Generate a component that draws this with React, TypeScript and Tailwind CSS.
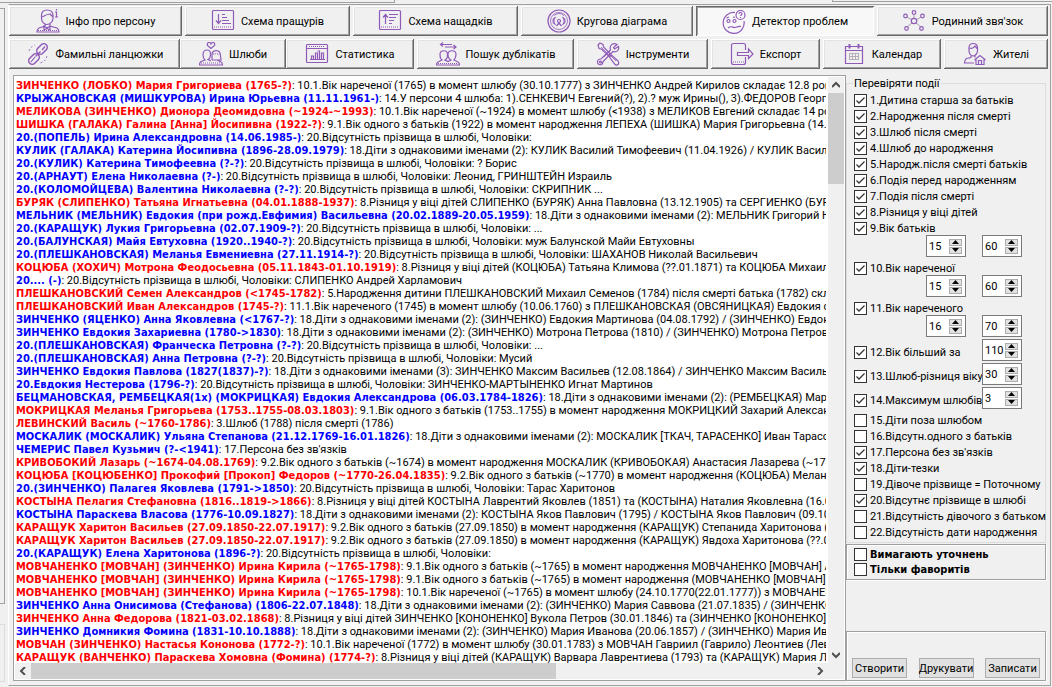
import type { ReactNode } from "react"
import clsx from "clsx"

type Kind = "red" | "blue"
type Row = [Kind, string, string]

const problems: Row[] = [
  ["red", "ЗИНЧЕНКО (ЛОБКО) Мария Григориева (1765-?)", "10.1.Вік нареченої (1765) в момент шлюбу (30.10.1777) з ЗИНЧЕНКО Андрей Кирилов складає 12.8 років"],
  ["blue", "КРЫЖАНОВСКАЯ (МИШКУРОВА) Ирина Юрьевна (11.11.1961-)", "14.У персони 4 шлюба: 1).СЕНКЕВИЧ Евгений(?), 2).? муж Ирины(), 3).ФЕДОРОВ Георгий"],
  ["red", "МЕЛИКОВА (ЗИНЧЕНКО) Дионора Деомидовна (~1924-~1993)", "10.1.Вік нареченої (~1924) в момент шлюбу (<1938) з МЕЛИКОВ Евгений складає 14 років"],
  ["red", "ШИШКА (ГАЛАКА) Галина [Анна] Йосипивна (1922-?)", "9.1.Вік одного з батьків (1922) в момент народження ЛЕПЕХА (ШИШКА) Мария Григорьевна (14.02"],
  ["blue", "20.(ПОПЕЛЬ) Ирина Александровна (14.06.1985-)", "20.Відсутність прізвища в шлюбі, Чоловіки:"],
  ["blue", "КУЛИК (ГАЛАКА) Катерина Йосипивна (1896-28.09.1979)", "18.Діти з однаковими іменами (2): КУЛИК Василий Тимофеевич (11.04.1926) / КУЛИК Василий"],
  ["blue", "20.(КУЛИК) Катерина Тимофеевна (?-?)", "20.Відсутність прізвища в шлюбі, Чоловіки: ? Борис"],
  ["blue", "20.(АРНАУТ) Елена Николаевна (?-)", "20.Відсутність прізвища в шлюбі, Чоловіки: Леонид, ГРИНШТЕЙН Израиль"],
  ["blue", "20.(КОЛОМОЙЦЕВА) Валентина Николаевна (?-?)", "20.Відсутність прізвища в шлюбі, Чоловіки: СКРИПНИК ..."],
  ["red", "БУРЯК (СЛИПЕНКО) Татьяна Игнатьевна (04.01.1888-1937)", "8.Різниця у віці дітей СЛИПЕНКО (БУРЯК) Анна Павловна (13.12.1905) та СЕРГИЕНКО (БУРЯК)"],
  ["blue", "МЕЛЬНИК (МЕЛЬНИК) Евдокия (при рожд.Евфимия) Васильевна (20.02.1889-20.05.1959)", "18.Діти з однаковими іменами (2): МЕЛЬНИК Григорий Ник"],
  ["blue", "20.(КАРАЩУК) Лукия Григорьевна (02.07.1909-?)", "20.Відсутність прізвища в шлюбі, Чоловіки: ..."],
  ["blue", "20.(БАЛУНСКАЯ) Майя Евтуховна (1920..1940-?)", "20.Відсутність прізвища в шлюбі, Чоловіки: муж Балунской Майи Евтуховны"],
  ["blue", "20.(ПЛЕШКАНОВСКАЯ) Меланья Евмениевна (27.11.1914-?)", "20.Відсутність прізвища в шлюбі, Чоловіки: ШАХАНОВ Николай Васильевич"],
  ["red", "КОЦЮБА (ХОХИЧ) Мотрона Феодосьевна (05.11.1843-01.10.1919)", "8.Різниця у віці дітей (КОЦЮБА) Татьяна Климова (??.01.1871) та КОЦЮБА Михаил"],
  ["blue", "20.... (-)", "20.Відсутність прізвища в шлюбі, Чоловіки: СЛИПЕНКО Андрей Харламович"],
  ["red", "ПЛЕШКАНОВСКИЙ Семен Александров (<1745-1782)", "5.Народження дитини ПЛЕШКАНОВСКИЙ Михаил Семенов (1784) після смерті батька (1782) складає"],
  ["red", "ПЛЕШКАНОВСКИЙ Иван Александров (1745-?)", "11.1.Вік нареченого (1745) в момент шлюбу (10.06.1760) з ПЛЕШКАНОВСКАЯ (ОВСЯНИЦКАЯ) Евдокия складає"],
  ["blue", "ЗИНЧЕНКО (ЯЦЕНКО) Анна Яковлевна (<1767-?)", "18.Діти з однаковими іменами (2): (ЗИНЧЕНКО) Евдокия Мартинова (04.08.1792) / (ЗИНЧЕНКО) Евдокия"],
  ["blue", "ЗИНЧЕНКО Евдокия Захариевна (1780->1830)", "18.Діти з однаковими іменами (2): (ЗИНЧЕНКО) Мотрона Петрова (1810) / (ЗИНЧЕНКО) Мотрона Петрова (1"],
  ["blue", "20.(ПЛЕШКАНОВСКАЯ) Франческа Петровна (?-?)", "20.Відсутність прізвища в шлюбі, Чоловіки: ..."],
  ["blue", "20.(ПЛЕШКАНОВСКАЯ) Анна Петровна (?-?)", "20.Відсутність прізвища в шлюбі, Чоловіки: Мусий"],
  ["blue", "ЗИНЧЕНКО Евдокия Павлова (1827(1837)-?)", "18.Діти з однаковими іменами (3): ЗИНЧЕНКО Максим Васильев (12.08.1864) / ЗИНЧЕНКО Максим Васильев (1"],
  ["blue", "20.Евдокия Нестерова (1796-?)", "20.Відсутність прізвища в шлюбі, Чоловіки: ЗИНЧЕНКО-МАРТЫНЕНКО Игнат Мартинов"],
  ["blue", "БЕЦМАНОВСКАЯ, РЕМБЕЦКАЯ(1х) (МОКРИЦКАЯ) Евдокия Александрова (06.03.1784-1826)", "18.Діти з однаковими іменами (2): (РЕМБЕЦКАЯ) Мария"],
  ["red", "МОКРИЦКАЯ Меланья Григорьева (1753..1755-08.03.1803)", "9.1.Вік одного з батьків (1753..1755) в момент народження МОКРИЦКИЙ Захарий Александров"],
  ["red", "ЛЕВИНСКИЙ Василь (~1760-1786)", "3.Шлюб (1788) після смерті (1786)"],
  ["blue", "МОСКАЛИК (МОСКАЛИК) Ульяна Степанова (21.12.1769-16.01.1826)", "18.Діти з однаковими іменами (2): МОСКАЛИК [ТКАЧ, ТАРАСЕНКО] Иван Тарасов"],
  ["blue", "ЧЕМЕРИС Павел Кузьмич (?-<1941)", "17.Персона без зв'язків"],
  ["red", "КРИВОБОКИЙ Лазарь (~1674-04.08.1769)", "9.2.Вік одного з батьків (~1674) в момент народження МОСКАЛИК (КРИВОБОКАЯ) Анастасия Лазарева (~1745"],
  ["red", "КОЦЮБА [КОЦЮБЕНКО] Прокофий [Прокоп] Федоров (~1770-26.04.1835)", "9.2.Вік одного з батьків (~1770) в момент народження (КОЦЮБА) Мелания"],
  ["blue", "20.(ЗИНЧЕНКО) Палагея Яковлева (1791->1850)", "20.Відсутність прізвища в шлюбі, Чоловіки: Тарас Харитонов"],
  ["red", "КОСТЫНА Пелагия Стефановна (1816..1819->1866)", "8.Різниця у віці дітей КОСТЫНА Лаврентий Яковлев (1851) та (КОСТЫНА) Наталия Яковлевна (16.0"],
  ["blue", "КОСТЫНА Параскева Власова (1776-10.09.1827)", "18.Діти з однаковими іменами (2): КОСТЫНА Яков Павлович (1795) / КОСТЫНА Яков Павлович (09.10.1"],
  ["red", "КАРАЩУК Харитон Васильев (27.09.1850-22.07.1917)", "9.2.Вік одного з батьків (27.09.1850) в момент народження (КАРАЩУК) Степанида Харитонова ("],
  ["red", "КАРАЩУК Харитон Васильев (27.09.1850-22.07.1917)", "9.2.Вік одного з батьків (27.09.1850) в момент народження (КАРАЩУК) Явдоха Харитонова (??.0"],
  ["blue", "20.(КАРАЩУК) Елена Харитонова (1896-?)", "20.Відсутність прізвища в шлюбі, Чоловіки:"],
  ["red", "МОВЧАНЕНКО [МОВЧАН] (ЗИНЧЕНКО) Ирина Кирила (~1765-1798)", "9.1.Вік одного з батьків (~1765) в момент народження МОВЧАНЕНКО [МОВЧАН] Арт"],
  ["red", "МОВЧАНЕНКО [МОВЧАН] (ЗИНЧЕНКО) Ирина Кирила (~1765-1798)", "9.1.Вік одного з батьків (~1765) в момент народження (МОВЧАНЕНКО [МОВЧАН]) М"],
  ["red", "МОВЧАНЕНКО [МОВЧАН] (ЗИНЧЕНКО) Ирина Кирила (~1765-1798)", "10.1.Вік нареченої (~1765) в момент шлюбу (24.10.1770(22.01.1777)) з МОВЧАНЕНКО"],
  ["blue", "ЗИНЧЕНКО Анна Онисимова (Стефанова) (1806-22.07.1848)", "18.Діти з однаковими іменами (2): (ЗИНЧЕНКО) Мария Саввова (21.07.1835) / (ЗИНЧЕНКО)"],
  ["red", "ЗИНЧЕНКО Анна Федорова (1821-03.02.1868)", "8.Різниця у віці дітей ЗИНЧЕНКО [КОНОНЕНКО] Вукола Петров (30.01.1846) та (ЗИНЧЕНКО [КОНОНЕНКО])"],
  ["blue", "ЗИНЧЕНКО Домникия Фомина (1831-10.10.1888)", "18.Діти з однаковими іменами (2): (ЗИНЧЕНКО) Мария Иванова (20.06.1857) / (ЗИНЧЕНКО) Мария Иванова"],
  ["red", "МОВЧАН (ЗИНЧЕНКО) Настасья Кононова (1772-?)", "10.1.Вік нареченої (1772) в момент шлюбу (30.01.1783) з МОВЧАН Гавриил (Гаврило) Леонтиев (Левко"],
  ["red", "КАРАЩУК (ВАНЧЕНКО) Параскева Хомовна (Фомина) (1774-?)", "8.Різниця у віці дітей (КАРАЩУК) Варвара Лаврентиева (1793) та (КАРАЩУК) Мария Лаврентиева"],
]

function Icon({ children }: { children: ReactNode }) {
  return (
    <svg className="size-6 shrink-0 text-[#8f5ab8]" viewBox="0 0 24 24" fill="none" stroke="currentColor" strokeWidth="1.2" aria-hidden="true">
      {children}
    </svg>
  )
}

const icons = {
  person: (
    <Icon>
      <path d="M5.500 6.500C5.500 2.500 8 1 11 1s6 1.500 6 5.500v3c0 3-3 6-6 6s-5.500-3-5.500-6zM5.500 8C8 7.500 9 5.500 14 5l3 3M9 15v2l-6 2c-2 1-2 2-2 4h22c0-2-.5-3-2-4l-7-2v-2M8 17l3 2 3-2v4l-3-1.500-3 1.500z" />
      <path d="M2 21.500h20" strokeDasharray="1 1" />
      <path d="M20.500 0v1.500M19 3h1.500v5M19 8h3" />
    </Icon>
  ),
  ancestors: (
    <Icon>
      <rect x="1.500" y="1.500" width="21" height="19" rx="1" />
      <path d="M7.500 5v9M5 11.500l2.500 3 2.500-3M11 5.500h3M11 8.500h5M11 11.500h7M11 14.500h9" />
      <path d="M3 18h18" strokeDasharray="1 1" />
    </Icon>
  ),
  descendants: (
    <Icon>
      <rect x="1.500" y="1.500" width="21" height="19" rx="1" />
      <path d="M7.500 15V6M5 8.500l2.500-3 2.500 3M11 5.500h9M11 8.500h7M11 11.500h5M11 14.500h3" />
      <path d="M3 18h18" strokeDasharray="1 1" />
    </Icon>
  ),
  circle: (
    <Icon>
      <circle cx="12" cy="12" r="11" />
      <circle cx="12" cy="12" r="8.500" strokeWidth=".8" />
      <circle cx="12" cy="12" r="1.500" />
      <path d="M8.500 8a5.500 5.500 0 0 0 0 8M15.500 8a5.500 5.500 0 0 1 0 8M9.500 17l2.500-3 2.500 3" />
      <path d="M7 6.500a8 8 0 0 1 10 0M6.500 9a7 7 0 0 0 0 6M17.500 9a7 7 0 0 1 0 6" strokeWidth=".8" />
    </Icon>
  ),
  confused: (
    <Icon>
      <path d="M13 2.500A10.500 10.500 0 1 0 22 11M6 18c3-3 5 0 7-.5s3-1.500 6-1" />
      <circle cx="18.500" cy="5" r="4.500" />
      <path d="M17 4c0-2 3-2 3 0 0 1-1.500 1-1.500 2M18.500 7v1" />
      <circle cx="6.500" cy="11" r="1.500" />
      <circle cx="12.500" cy="11" r="1.500" />
      <path d="M4.500 8 7 7M11 7l2 .5" />
    </Icon>
  ),
  network: (
    <Icon>
      <path d="m5 8 5 3M19 8l-5 3M12 6v3M5 18l5-4M19 18l-5-4" stroke="#a9a0b0" strokeWidth="1" />
      <circle cx="12" cy="12" r="2.700" />
      <circle cx="12" cy="3.500" r="1.800" />
      <circle cx="3.500" cy="7" r="1.800" />
      <circle cx="20.500" cy="7" r="1.800" />
      <circle cx="4.500" cy="19.500" r="1.800" />
      <circle cx="19.500" cy="19.500" r="1.800" />
    </Icon>
  ),
  chain: (
    <Icon>
      <rect x="-6" y="-3.500" width="12" height="7" rx="3.500" transform="translate(16 7) rotate(-45)" strokeWidth="1.500" />
      <rect x="-6" y="-3.500" width="12" height="7" rx="3.500" transform="translate(8 17) rotate(-45)" strokeWidth="1.500" />
      <path d="m5 20 4-5M9.500 14.500l5-5M16 8l3-3.500" />
      <path d="M3 9c1-3 3-5 6-6M21 14c-1 4-3 6-7 7" strokeDasharray="2 2" strokeWidth=".8" />
    </Icon>
  ),
  wedding: (
    <Icon>
      <path d="M12 6.500 8.500 3.500C7.500 0 11-.5 12 2c1-2.500 4.500-2 3.500 1.500z" />
      <path d="M4 13c0-3 1-5 4-5s3.500 2 3.500 4c0 3-1 5-2.500 5.500l3 1.500M4 13c0 3 1 4 2 5l-4 1.500c-1.500 1-1.500 2-1.500 3.500h23c0-1.500 0-2.500-2-3.500l-3-1M13 18v-6c0-4 8.500-5.500 8.500 2l.5 4h-9" />
      <path d="M14 12c3 0 5-1 6 1M2 21h20" strokeDasharray="1 1" />
    </Icon>
  ),
  stats: (
    <Icon>
      <rect x="1.500" y="2.500" width="21" height="18" rx="1" />
      <path d="M2 6.500h20M5 17.500h15M6.500 17v-3h2v3M10.500 17v-6h2v6M12.500 9h2v8M16.500 17v-6h2v6" />
      <path d="M4 4.500h16" strokeDasharray="1 1" />
    </Icon>
  ),
  duplicates: (
    <Icon>
      <path d="M5 2.500h11M7 .5l-2.500 2 2.500 2M9 5h11M17.500 3l2.500 2-2.500 2" />
      <path d="M4 12.500c0-5 7.500-5 7.500 0 0 3-1 5-2.500 5.500l3 1.500 3-1.500c-2-1-3-3-3-5.500 0-5 8-5 8 0 0 3-1 4-2 5.500l3 1.500c2 .5 2.500 1.500 2.500 3.500H.5c0-2 .5-3 2.500-3.500L6 18c-1.500-1-2-3-2-5.500" />
      <path d="M2 21.500h20" strokeDasharray="1 1" />
    </Icon>
  ),
  tools: (
    <Icon>
      <path d="m2 3 2-2 3 1.500.5 2.500 6.500 6.500-2 2L5.500 7 3 6.500zM13.500 15l2-2 6.500 6c2 3-1 5-3 3.500zM21 2.500l-3.500 3 1 1.500 4-2.500c1 4-2 6-5.500 5L7 19.500c0 4-5.500 4.500-5.500.5C1.500 17.500 4 17 5 17L14.500 8C13 3.500 17 0 21 2.500z" />
      <path d="m15 14 5 5M5 5l6 6M8 15l6-6" strokeWidth=".8" />
      <circle cx="4.500" cy="20" r="1" />
    </Icon>
  ),
  export: (
    <Icon>
      <path d="M15.500 8V3.500c0-1-.5-2-2-2h-10c-1.500 0-2 1-2 2v17c0 1 .5 2 2 2h10c1.500 0 2-1 2-2V15" />
      <path d="M7.500 10.500h11V7l4.500 5-4.500 4.500v-3h-11z" />
      <path d="M3 20h11" strokeDasharray="1 1" />
    </Icon>
  ),
  calendar: (
    <Icon>
      <path d="M3.500 4.500h17v17h-17zM3.500 8.500h17" />
      <path d="M7.500 2v4.500M16.500 2v4.500" strokeWidth="2" />
      <path d="M7.500 11.500h9M7.500 14.500h9M7.500 17.500h9M7.500 11v7M10.500 11v7M13.500 11v7M16.500 11v7" stroke="#a9a0b0" strokeWidth=".8" />
    </Icon>
  ),
  residents: (
    <Icon>
      <path d="M6 6c0-3 1.500-4.500 4-4.500s4.500 1.500 4.500 4.500v3c0 2-2 5-4.500 5S6 11 6 9zM6 6c3 1 5 0 6-2l2.500 3M8 14v1.500l-4.500 1C2 17.500 1.500 18.500 1.500 21H11M12 14v1.500" />
      <path d="m11.500 18 5.500-4.500 5.500 4.500M13 17v5.500h8V17M15.500 22.500v-4h3v4" />
    </Icon>
  ),
}

function Tab({ icon, label, className, active }: { icon: ReactNode; label: string; className: string; active?: boolean }) {
  return (
    <button
      type="button"
      className={clsx(
        "flex h-[30px] min-w-0 basis-0 items-center justify-center gap-[6px] whitespace-nowrap",
        active
          ? "bg-[#f8f8f8] pt-px shadow-[inset_1px_1px_#696969,inset_-1px_-1px_#fff,inset_2px_2px_#a0a0a0]"
          : "bg-[#f0f0f0] shadow-[inset_-1px_-1px_#696969,inset_1px_1px_#fff,inset_-2px_-2px_#a0a0a0,inset_2px_2px_#e3e3e3]",
        className
      )}
    >
      {icon}
      <span>{label}</span>
    </button>
  )
}

function Check({ label, checked, bold }: { label: string; checked?: boolean; bold?: boolean }) {
  return (
    <label className={clsx("flex items-center gap-[3px] whitespace-nowrap", bold ? "h-[15px] font-bold" : "h-4")}>
      <span className="grid size-[13px] shrink-0 place-items-center">
        <input
          type="checkbox"
          defaultChecked={checked}
          className="peer col-start-1 row-start-1 size-[13px] appearance-none border border-[#333] bg-white"
        />
        <svg className="pointer-events-none invisible col-start-1 row-start-1 size-[11px] peer-checked:visible" viewBox="0 0 11 11" fill="none" stroke="#333" strokeWidth="1.300" aria-hidden="true">
          <path d="m1.500 5.500 2.500 2.500 5.500-5.500" />
        </svg>
      </span>
      <span>{label}</span>
    </label>
  )
}

function Spinner({ value, label }: { value: string; label: string }) {
  return (
    <div className="flex h-[22px] w-10 shrink-0 items-center border border-[#7a7a7a] bg-white pr-[3px] pl-[2px]">
      <input type="text" defaultValue={value} aria-label={label} className="w-0 min-w-0 grow bg-transparent outline-none" />
      <div className="flex shrink-0 flex-col gap-px">
        <button type="button" aria-label="Більше" className="flex h-[7px] w-[13px] items-center justify-center border border-[#adadad] bg-[#e1e1e1]">
          <svg className="h-1 w-[7px]" viewBox="0 0 7 4" aria-hidden="true"><path d="M0 4 3.500 0 7 4z" /></svg>
        </button>
        <button type="button" aria-label="Менше" className="flex h-[7px] w-[13px] items-center justify-center border border-[#adadad] bg-[#e1e1e1]">
          <svg className="h-1 w-[7px]" viewBox="0 0 7 4" aria-hidden="true"><path d="m0 0 3.500 4L7 0z" /></svg>
        </button>
      </div>
    </div>
  )
}

function SpinnerPair({ from, to, label }: { from: string; to: string; label: string }) {
  return (
    <div className="-mt-px mb-px flex h-6 justify-end gap-4 pr-[23px]">
      <Spinner value={from} label={`${label}: від`} />
      <Spinner value={to} label={`${label}: до`} />
    </div>
  )
}

function CheckSpinner({ label, value }: { label: string; value: string }) {
  return (
    <div className="flex h-6 items-center justify-between pr-[23px]">
      <Check label={label} checked />
      <div className="-mt-1 -ml-2">
        <Spinner value={value} label={label} />
      </div>
    </div>
  )
}

function Arrow({ d, label }: { d: string; label: string }) {
  return (
    <button type="button" aria-label={label} className="grid size-4 shrink-0 place-items-center">
      <svg className="size-2" viewBox="0 0 8 8" fill="none" stroke="#505050" strokeWidth="2" aria-hidden="true">
        <path d={d} />
      </svg>
    </button>
  )
}

function ProblemList() {
  return (
    <div className="flex min-w-0 grow flex-col border border-[#a0a0a0] bg-white p-px">
      <div className="flex grow">
        <ul className="h-[586px] w-0 grow overflow-hidden pt-[2px] pl-px">
          {problems.map(([kind, name, text], i) => (
            <li key={i} className="h-[13px] whitespace-pre leading-[13px]">
              <b className={clsx("font-['DejaVu_Sans_Condensed',sans-serif]", kind === "red" ? "text-[#f00]" : "text-[#00f]")}>{name}</b>
              {": "}
              {text}
            </li>
          ))}
        </ul>
        <div className="ml-[2px] flex w-4 flex-col bg-[#f0f0f0]">
          <Arrow d="m0 6 4-4 4 4" label="Вгору" />
          <div className="h-[91px] bg-[#cdcdcd]" />
          <div className="grow" />
          <Arrow d="m0 2 4 4 4-4" label="Вниз" />
        </div>
      </div>
      <div className="flex h-4 bg-[#f0f0f0] pr-4">
        <Arrow d="M6 0 2 4l4 4" label="Ліворуч" />
        <div className="grow-524 bg-[#cdcdcd]" />
        <div className="grow-256" />
        <Arrow d="m2 0 4 4-4 4" label="Праворуч" />
      </div>
    </div>
  )
}

function CommandButton({ children }: { children: ReactNode }) {
  return (
    <button type="button" className="flex h-5 w-[55px] items-center justify-center whitespace-nowrap border border-[#adadad] bg-[#e1e1e1]">
      {children}
    </button>
  )
}

function Filters() {
  return (
    <aside className="flex w-[200px] shrink-0 flex-col">
      <fieldset className="min-w-0 border border-[#dcdcdc] pb-[2px] pl-[7px]">
        <legend className="-ml-px h-[17px] px-px pt-px leading-4">Перевіряти події</legend>
        <Check label="1.Дитина старша за батьків" checked />
        <Check label="2.Народження після смерті" checked />
        <Check label="3.Шлюб після смерті" checked />
        <Check label="4.Шлюб до народження" checked />
        <Check label="5.Народж.після смерті батьків" checked />
        <Check label="6.Подія перед народженням" checked />
        <Check label="7.Подія після смерті" checked />
        <Check label="8.Різниця у віці дітей" checked />
        <Check label="9.Вік батьків" checked />
        <SpinnerPair from="15" to="60" label="Вік батьків" />
        <Check label="10.Вік нареченої" checked />
        <SpinnerPair from="15" to="60" label="Вік нареченої" />
        <Check label="11.Вік нареченого" checked />
        <SpinnerPair from="16" to="70" label="Вік нареченого" />
        <CheckSpinner label="12.Вік більший за" value="110" />
        <CheckSpinner label="13.Шлюб-різниця віку" value="30" />
        <CheckSpinner label="14.Максимум шлюбів" value="3" />
        <Check label="15.Діти поза шлюбом" />
        <Check label="16.Відсутн.одного з батьків" />
        <Check label="17.Персона без зв'язків" checked />
        <Check label="18.Діти-тезки" checked />
        <Check label="19.Дівоче прізвище = Поточному" />
        <Check label="20.Відсутнє прізвище в шлюбі" checked />
        <Check label="21.Відсутність дівочого з батьком" />
        <Check label="22.Відсутність дати народження" />
      </fieldset>
      <div className="mt-px flex h-9 flex-col border border-[#a0a0a0] pt-[2px] pl-[7px] font-['DejaVu_Sans_Condensed',sans-serif] shadow-[inset_1px_1px_#fff,1px_1px_#fff]">
        <Check label="Вимагають уточнень" bold />
        <Check label="Тільки фаворитів" bold />
      </div>
      <div className="mt-auto flex h-[50px] items-end justify-between border border-[#a0a0a0] px-[5px] pb-[2px] shadow-[inset_1px_1px_#fff,1px_1px_#fff]">
        <CommandButton>Створити</CommandButton>
        <CommandButton>Друкувати</CommandButton>
        <CommandButton>Записати</CommandButton>
      </div>
    </aside>
  )
}

export default function App() {
  return (
    <div className="flex min-h-screen flex-col bg-[#f0f0f0] font-['Roboto',sans-serif] text-[11px] leading-[13px] text-black">
      <div className="flex h-[3px] shrink-0 justify-between">
        <div className="w-[395px] border-r border-b border-[#a0a0a0]" />
        <div className="h-[2px] w-[220px] border-b border-l border-[#a0a0a0]" />
      </div>
      <div className="mt-px flex grow">
        <div className="flex w-[5px] shrink-0 flex-col">
          <div className="mt-1 h-[596px] border-t border-r border-b border-[#a0a0a0]" />
          <div className="mt-5 h-[58px] border-t border-r border-b border-[#dcdcdc]" />
        </div>
        <main className="ml-[3px] mr-px mb-px flex min-w-0 grow flex-col border-t border-r border-b border-l border-t-[#a0a0a0] border-r-[#a0a0a0] border-b-[#a0a0a0] border-l-white pt-px">
          <nav className="flex flex-col gap-[3px] pr-[2px]">
            <div className="flex gap-[3px]">
              <Tab className="grow-173" icon={icons.person} label="Інфо про персону" />
              <Tab className="grow-165" icon={icons.ancestors} label="Схема пращурів" />
              <Tab className="grow-165" icon={icons.descendants} label="Схема нащадків" />
              <Tab className="grow-172" icon={icons.circle} label="Кругова діаграма" />
              <Tab className="grow-178" icon={icons.confused} label="Детектор проблем" active />
              <Tab className="grow-171" icon={icons.network} label="Родинний звя'зок" />
            </div>
            <div className="flex gap-[3px]">
              <div className="flex min-w-0 grow-405 basis-0">
                <Tab className="grow-171" icon={icons.chain} label="Фамильні ланцюжки" />
                <Tab className="grow-106" icon={icons.wedding} label="Шлюби" />
                <Tab className="grow-128" icon={icons.stats} label="Статистика" />
              </div>
              <Tab className="grow-157" icon={icons.duplicates} label="Пошук дублікатів" />
              <Tab className="grow-131" icon={icons.tools} label="Інструменти" />
              <Tab className="grow-109" icon={icons.export} label="Експорт" />
              <Tab className="grow-118" icon={icons.calendar} label="Календар" />
              <Tab className="grow-104" icon={icons.residents} label="Жителі" />
            </div>
          </nav>
          <div className="mt-[6px] mb-1 ml-1 mr-1 flex grow">
            <ProblemList />
            <Filters />
          </div>
        </main>
      </div>
    </div>
  )
}
